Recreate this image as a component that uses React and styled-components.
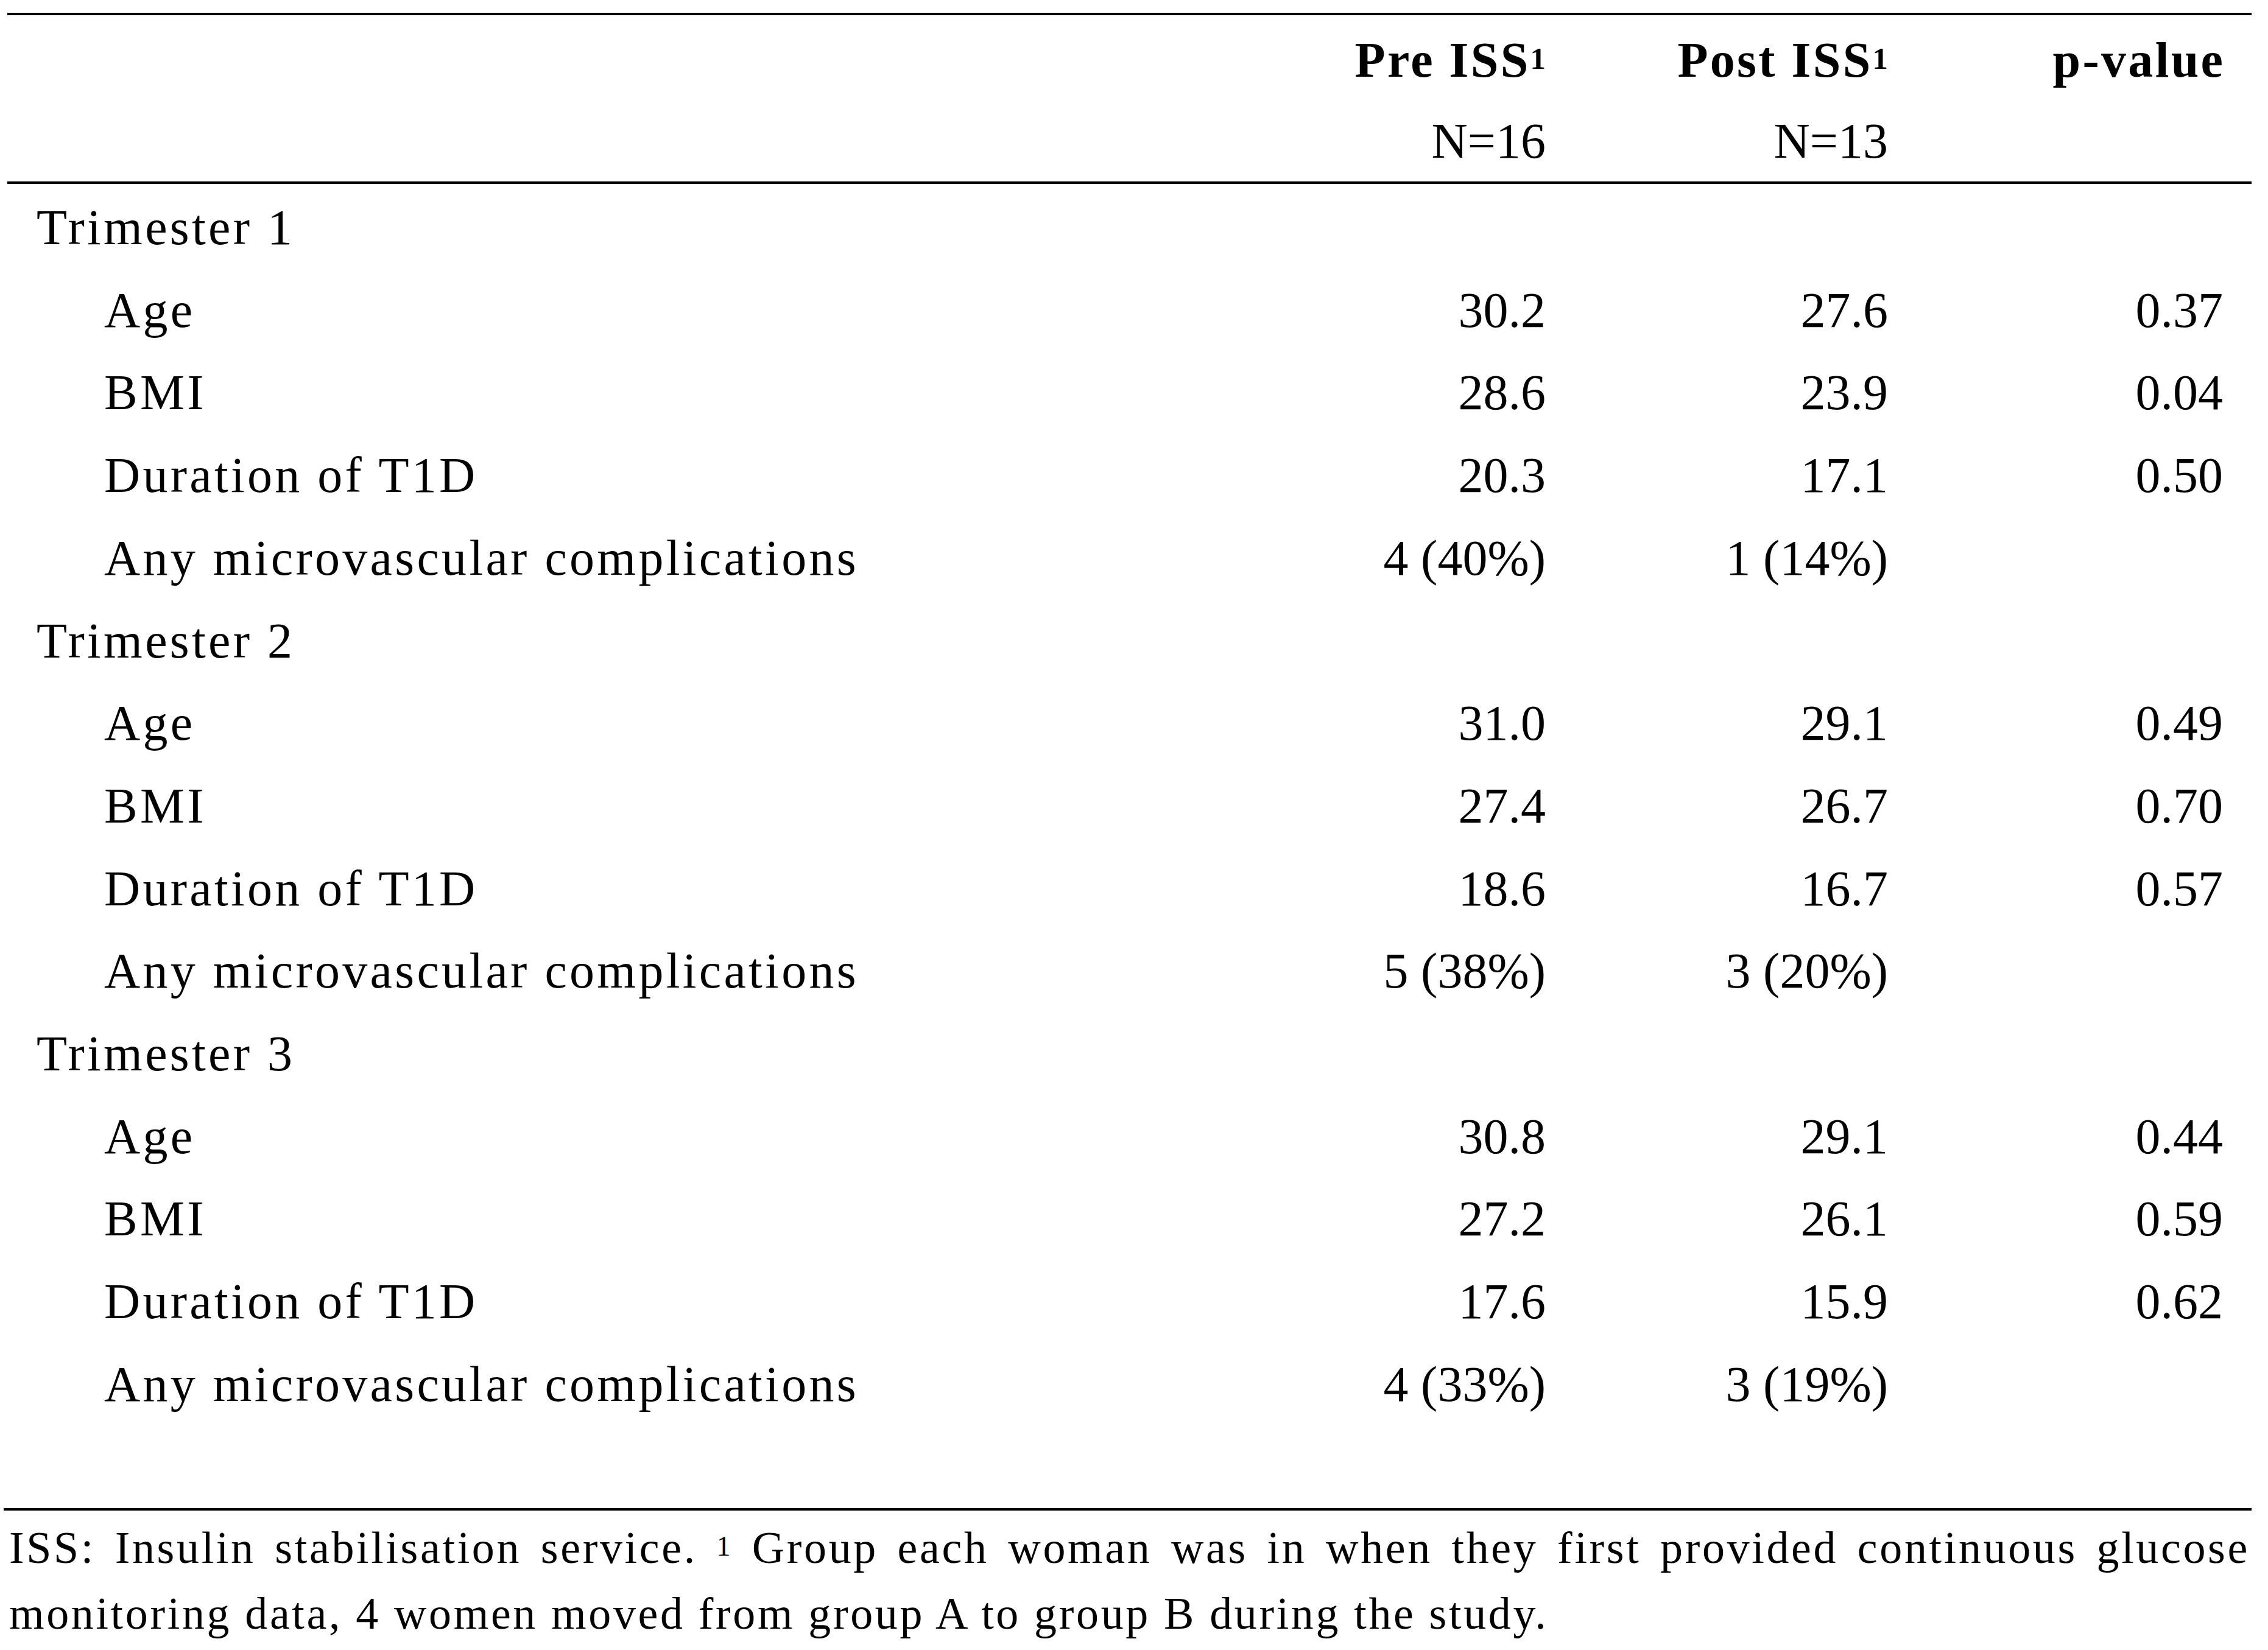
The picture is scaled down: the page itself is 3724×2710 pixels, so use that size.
import React from "react";
import styled, { createGlobalStyle } from "styled-components";

const GlobalStyle = createGlobalStyle`
  html, body { margin: 0; padding: 0; background: #ffffff; }
  body {
    font-family: "Liberation Serif", "Times New Roman", serif;
    color: #000000;
  }
`;

const Page = styled.div`
  box-sizing: border-box;
  width: 3697px;
  padding: 21px 0 0 6px;
`;

const Table = styled.div`
  margin-left: 6px;
  border-top: 4px solid #000;
`;

const Header = styled.div`
  padding-top: 7px;
  border-bottom: 4px solid #000;
`;

const Body = styled.div`
  padding: 4px 0 135.5px;
`;

const Row = styled.div`
  display: grid;
  grid-template-columns: 1fr 338px 562px 550px;
  padding-right: 47px;
  font-size: 82px;
  line-height: ${(p) => (p.$head ? "133px" : "135.7px")};
  font-weight: ${(p) => (p.$bold ? 700 : 400)};
  white-space: nowrap;
`;

const Label = styled.div`
  padding-left: ${(p) => (p.$sub ? "159px" : "48px")};
  letter-spacing: 0.052em;
`;

const Num = styled.div`
  text-align: right;
  letter-spacing: ${(p) => (p.$spaced ? "0.04em" : "0")};
  margin-right: ${(p) => (p.$spaced ? "-0.04em" : "0")};
`;

const Sup = styled.sup`
  font-size: 0.62em;
  line-height: 0;
  vertical-align: 0.26em;
`;

const Footnote = styled.p`
  margin: 0;
  border-top: 4px solid #000;
  padding: 7px 3px 0 9px;
  font-size: 74px;
  line-height: 108px;
  text-align: justify;
  letter-spacing: 0.049em;
`;

const groups = [
  {
    name: "Trimester 1",
    rows: [
      ["Age", "30.2", "27.6", "0.37"],
      ["BMI", "28.6", "23.9", "0.04"],
      ["Duration of T1D", "20.3", "17.1", "0.50"],
      ["Any microvascular complications", "4 (40%)", "1 (14%)", ""],
    ],
  },
  {
    name: "Trimester 2",
    rows: [
      ["Age", "31.0", "29.1", "0.49"],
      ["BMI", "27.4", "26.7", "0.70"],
      ["Duration of T1D", "18.6", "16.7", "0.57"],
      ["Any microvascular complications", "5 (38%)", "3 (20%)", ""],
    ],
  },
  {
    name: "Trimester 3",
    rows: [
      ["Age", "30.8", "29.1", "0.44"],
      ["BMI", "27.2", "26.1", "0.59"],
      ["Duration of T1D", "17.6", "15.9", "0.62"],
      ["Any microvascular complications", "4 (33%)", "3 (19%)", ""],
    ],
  },
];

export default function App() {
  return (
    <Page>
      <GlobalStyle />
      <Table>
        <Header>
          <Row $head $bold>
            <Label />
            <Num $spaced>
              Pre ISS<Sup>1</Sup>
            </Num>
            <Num $spaced>
              Post ISS<Sup>1</Sup>
            </Num>
            <Num $spaced>p-value</Num>
          </Row>
          <Row $head>
            <Label />
            <Num>N=16</Num>
            <Num>N=13</Num>
            <Num />
          </Row>
        </Header>
        <Body>
          {groups.map((g) => (
            <React.Fragment key={g.name}>
              <Row>
                <Label>{g.name}</Label>
                <Num />
                <Num />
                <Num />
              </Row>
              {g.rows.map((r, i) => (
                <Row key={g.name + i}>
                  <Label $sub>{r[0]}</Label>
                  <Num>{r[1]}</Num>
                  <Num>{r[2]}</Num>
                  <Num>{r[3]}</Num>
                </Row>
              ))}
            </React.Fragment>
          ))}
        </Body>
      </Table>
      <Footnote>
        <span>ISS: Insulin stabilisation service.</span> <Sup>1</Sup>{" "}
        <span>Group each woman was in when they first provided continuous glucose</span>{" "}
        <span>monitoring data, 4 women moved from group A to group B during the study.</span>
      </Footnote>
    </Page>
  );
}
